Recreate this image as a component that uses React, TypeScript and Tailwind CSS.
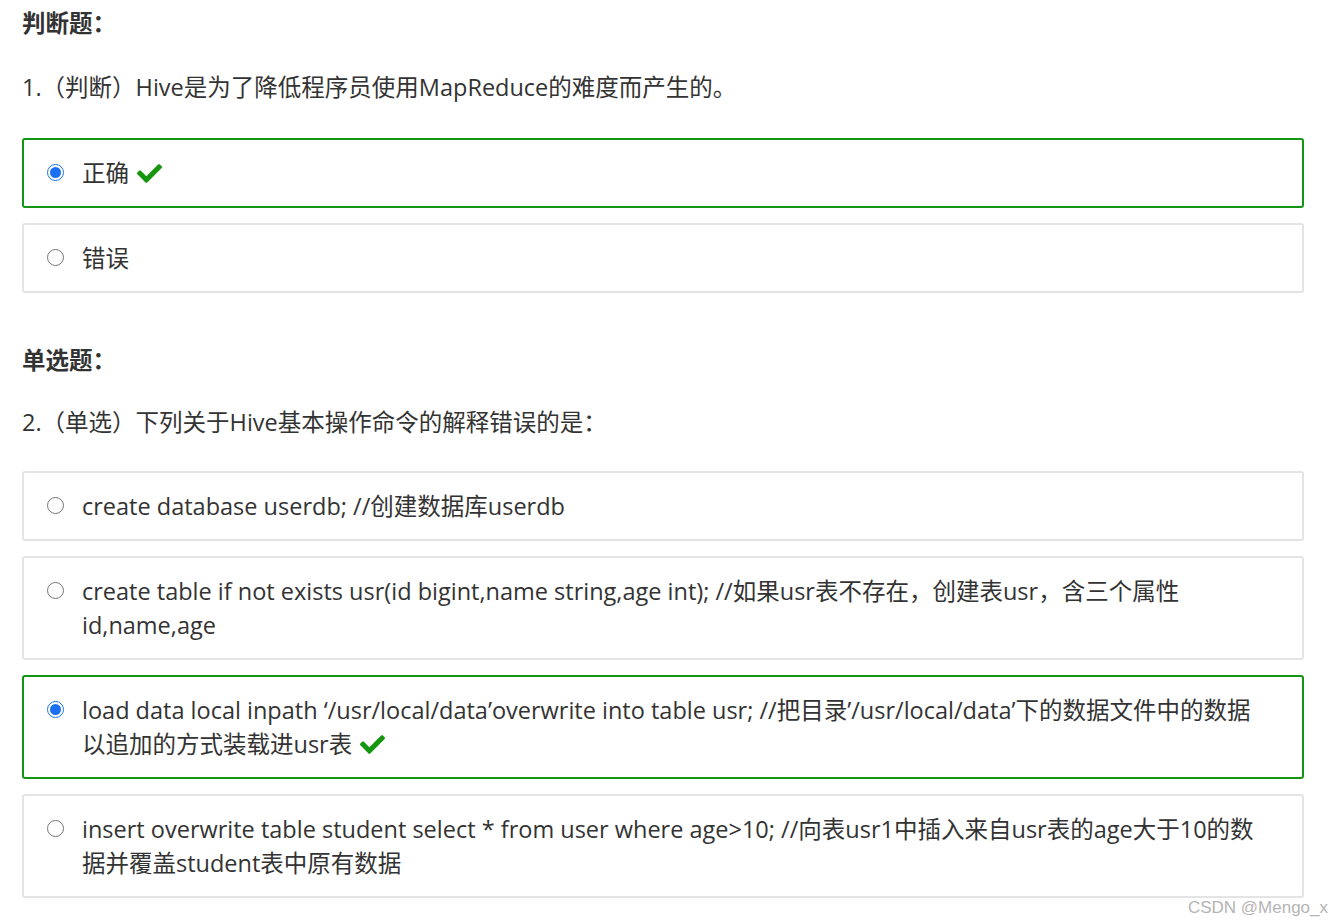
import { ReactNode } from 'react';

const font = { fontFamily: '"Open Sans", "Noto Sans CJK SC", sans-serif' };

const Check = () => (
  <svg viewBox="0 0 512 512" className="inline-block w-[25px] h-[25px] ml-[8px] align-[-4px]" fill="#14960f">
    <path d="M173.9 439.4 7.5 273c-10-10-10-26.2 0-36.2l36.2-36.2c10-10 26.2-10 36.2 0L192 312.7 432.1 72.6c10-10 26.2-10 36.2 0l36.2 36.2c10 10 10 26.2 0 36.2L210.1 439.4c-10 10-26.2 10-36.2 0z" />
  </svg>
);

const Radio = ({ on }: { on: boolean }) => (
  <span className="shrink-0 mt-[8px] w-[17px] h-[17px] rounded-full flex items-center justify-center border border-[#767676] bg-white"
    style={on ? { borderColor: '#1a73e8' } : undefined}>
    {on && <span className="w-[11px] h-[11px] rounded-full bg-[#1a6ff2]" />}
  </span>
);

const Option = ({ children, on = false, correct = false }: { children: ReactNode; on?: boolean; correct?: boolean }) => (
  <div className={`flex gap-[18px] pl-[23px] pr-[20px] py-[16px] rounded-[3px] border-2 ${correct ? 'border-[#149614]' : 'border-[#e4e4e4]'}`}>
    <Radio on={on} />
    <div className="text-[23.5px] leading-[34px] text-[#333] whitespace-nowrap">
      {children}
      {correct && <Check />}
    </div>
  </div>
);

export default function App() {
  return (
    <div className="relative w-[1342px] h-[924px] bg-white px-[22px] overflow-hidden" style={font}>
      <div className="w-[1282px]">
        <div className="pt-[6px] text-[23.5px] leading-[34px] font-bold text-[#333]">判断题：</div>
        <div className="mt-[30px] text-[23.5px] leading-[34px] text-[#333]">1.（判断）Hive是为了降低程序员使用MapReduce的难度而产生的。</div>
        <div className="mt-[34px] flex flex-col gap-[15px]">
          <Option on correct>正确</Option>
          <Option>错误</Option>
        </div>
        <div className="mt-[50px] text-[23.5px] leading-[34px] font-bold text-[#333]">单选题：</div>
        <div className="mt-[28px] text-[23.5px] leading-[34px] text-[#333]">2.（单选）下列关于Hive基本操作命令的解释错误的是：</div>
        <div className="mt-[32px] flex flex-col gap-[15px]">
          <Option>create database userdb; //创建数据库userdb</Option>
          <Option>create table if not exists usr(id bigint,name string,age int); //如果usr表不存在，创建表usr，含三个属性<br />id,name,age</Option>
          <Option on correct>load data local inpath ‘/usr/local/data’overwrite into table usr; //把目录’/usr/local/data’下的数据文件中的数据<br />以追加的方式装载进usr表</Option>
          <Option>insert overwrite table student select * from user where age&gt;10; //向表usr1中插入来自usr表的age大于10的数<br />据并覆盖student表中原有数据</Option>
        </div>
      </div>
      <div className="absolute right-[14px] bottom-[4px] text-[17px] text-[#b4b4b4]" style={{ fontFamily: '"Liberation Sans", sans-serif' }}>CSDN @Mengo_x</div>
    </div>
  );
}
